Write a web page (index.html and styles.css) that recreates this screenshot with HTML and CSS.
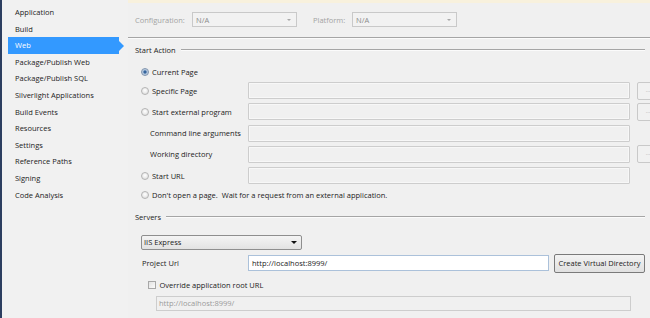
FILE: index.html
```html
<!DOCTYPE html>
<html>
<head>
<meta charset="utf-8">
<link rel="stylesheet" href="styles.css">
</head>
<body>
<div class="window">
  <nav class="sidebar">
    <div class="nav-item">Application</div>
    <div class="nav-item">Build</div>
    <div class="nav-item selected">Web</div>
    <div class="nav-item">Package/Publish Web</div>
    <div class="nav-item">Package/Publish SQL</div>
    <div class="nav-item">Silverlight Applications</div>
    <div class="nav-item">Build Events</div>
    <div class="nav-item">Resources</div>
    <div class="nav-item">Settings</div>
    <div class="nav-item">Reference Paths</div>
    <div class="nav-item">Signing</div>
    <div class="nav-item">Code Analysis</div>
  </nav>
  <main class="content">
    <div class="topstrip"></div>
    <div class="config-row">
      <span class="cfg-label cfg-config">Configuration:</span>
      <div class="combo disabled"><span>N/A</span><span class="caret gray"></span></div>
      <span class="cfg-label cfg-platform">Platform:</span>
      <div class="combo disabled"><span>N/A</span><span class="caret gray"></span></div>
    </div>
    <div class="rule"></div>
    <div class="section-head head-start"><span>Start Action</span><div class="line"></div></div>
    <div class="options">
      <div class="row r-first">
        <div class="opt"><span class="radio checked"></span><span>Current Page</span></div>
      </div>
      <div class="row r-second">
        <div class="opt"><span class="radio"></span><span>Specific Page</span></div>
        <div class="box"></div>
        <div class="ellipsis">...</div>
      </div>
      <div class="row">
        <div class="opt"><span class="radio"></span><span>Start external program</span></div>
        <div class="box"></div>
        <div class="ellipsis">...</div>
      </div>
      <div class="row">
        <div class="opt indent"><span>Command line arguments</span></div>
        <div class="box"></div>
      </div>
      <div class="row">
        <div class="opt indent"><span>Working directory</span></div>
        <div class="box"></div>
        <div class="ellipsis">...</div>
      </div>
      <div class="row">
        <div class="opt"><span class="radio"></span><span>Start URL</span></div>
        <div class="box"></div>
      </div>
      <div class="row r-last">
        <div class="opt wide"><span class="radio"></span><span>Don't open a page.&nbsp; Wait for a request from an external application.</span></div>
      </div>
    </div>
    <div class="section-head head-servers"><span>Servers</span><div class="line"></div></div>
    <div class="server-combo"><span>IIS Express</span><span class="caret"></span></div>
    <div class="url-row">
      <span class="url-label">Project Url</span>
      <div class="url-box">http://localhost:8999/</div>
      <div class="btn">Create Virtual Directory</div>
    </div>
    <div class="check-row"><span class="check"></span><span>Override application root URL</span></div>
    <div class="root-box">http://localhost:8999/</div>
  </main>
</div>
</body>
</html>
```
FILE: styles.css
```css
* { box-sizing: border-box; }
html, body { margin: 0; padding: 0; }
body {
  width: 650px;
  height: 318px;
  overflow: hidden;
  background: #f0f0f0;
  font-family: "Open Sans", "Noto Sans", sans-serif;
  font-size: 7.5px;
  color: #222;
}
.window { display: flex; height: 318px; }

.sidebar {
  width: 128px;
  flex: none;
  border-left: 2px solid #2c3e60;
  padding-top: 4px;
  background: #f1f1f1;
}
.nav-item {
  height: 16.6px;
  line-height: 16.6px;
  padding-left: 13px;
  white-space: nowrap;
}
.nav-item.selected {
  position: relative;
  margin-left: 6px;
  width: 111px;
  padding-left: 7px;
  background: #3399ff;
  color: #fff;
}
.nav-item.selected::after {
  content: "";
  position: absolute;
  right: -5px;
  top: 3.5px;
  border-top: 5px solid transparent;
  border-bottom: 5px solid transparent;
  border-left: 5px solid #3399ff;
}

.content {
  flex: 1;
  display: flex;
  flex-direction: column;
  padding-left: 7px;
  overflow: hidden;
}
.topstrip {
  height: 3px;
  margin-left: -7px;
  background: #f8f1dd;
}
.config-row {
  display: flex;
  align-items: center;
  margin-top: 9px;
  height: 15px;
}
.cfg-label { color: #a3a3a3; }
.cfg-config { width: 57px; }
.cfg-platform { width: 39px; margin-left: 16px; }
.combo {
  width: 105px;
  height: 15px;
  border: 1px solid #c9c9c9;
  display: flex;
  align-items: center;
  justify-content: space-between;
  padding: 0 5px 0 3px;
  color: #8c8c8c;
  background: #f2f2f2;
}
.caret {
  width: 0; height: 0;
  border-left: 3px solid transparent;
  border-right: 3px solid transparent;
  border-top: 3px solid #111;
}
.caret.gray { border-top-color: #a8a8a8; border-left-width: 2.5px; border-right-width: 2.5px; border-top-width: 2.5px; }

.rule {
  margin-top: 10px;
  margin-left: -7px;
  height: 2px;
  border-top: 1px solid #a5a5a5;
  border-bottom: 1px solid #fbfbfb;
}
.section-head {
  display: flex;
  align-items: center;
  height: 11px;
}
.section-head .line {
  flex: 1;
  height: 2px;
  margin: 0 5px 0 5px;
  border-top: 1px solid #a5a5a5;
  border-bottom: 1px solid #fbfbfb;
}
.head-start { margin-top: 5px; }
.head-servers { margin-top: 8px; }

.options { margin-top: 8px; padding-left: 6px; }
.row {
  display: flex;
  align-items: center;
  height: 17px;
  margin-top: 4.3px;
}
.row.r-first { margin-top: 0; }
.row.r-second { margin-top: 2px; }
.row.r-last { margin-top: 2.5px; }
.opt {
  width: 107px;
  flex: none;
  display: flex;
  align-items: center;
  white-space: nowrap;
}
.opt.wide { width: auto; }
.opt.indent { padding-left: 9px; }
.radio {
  width: 8px; height: 8px;
  border-radius: 50%;
  border: 1px solid #b4b4b4;
  background: radial-gradient(circle at 50% 40%, #ffffff 0%, #e4e4e4 70%, #d2d2d2 100%);
  margin-right: 3px;
  flex: none;
}
.radio.checked {
  border-color: #7f93ad;
  background: radial-gradient(circle, #2f5d94 0, #3b6aa3 30%, #a9bfd8 45%, #dce6f1 100%);
}
.box {
  width: 382px;
  height: 17px;
  flex: none;
  border: 1px solid #cdcdcd;
  border-radius: 1px;
  background: #f0f0f0;
  box-shadow: inset 0 0 0 1px #f7f7f7;
}
.ellipsis {
  width: 22px;
  height: 18px;
  flex: none;
  margin-left: 7px;
  border: 1px solid #c9c9c9;
  border-radius: 2px;
  background: #f1f1f1;
  color: #b0b0b0;
  font-size: 6px;
  line-height: 14px;
  text-align: center;
}

.server-combo {
  margin-top: 12px;
  margin-left: 6px;
  width: 161px;
  height: 15px;
  border: 1px solid #8e8e8e;
  border-radius: 2px;
  background: linear-gradient(#f4f4f4, #e2e2e2);
  display: flex;
  align-items: center;
  justify-content: space-between;
  padding: 0 4px 0 2px;
}
.url-row {
  display: flex;
  align-items: center;
  margin-top: 4px;
  height: 19px;
}
.url-label { width: 113px; padding-left: 7px; flex: none; }
.url-box {
  width: 301px;
  height: 16px;
  flex: none;
  border: 1px solid #abc1da;
  background: #fff;
  padding-left: 3px;
  line-height: 14px;
  white-space: nowrap;
}
.btn {
  width: 91px;
  height: 19px;
  flex: none;
  margin-left: 5px;
  border: 1px solid #7a7a7a;
  border-radius: 2px;
  background: linear-gradient(#f3f3f3, #e0e0e0);
  text-align: center;
  line-height: 17px;
  white-space: nowrap;
}
.check-row {
  display: flex;
  align-items: center;
  margin-top: 6px;
  height: 12px;
  padding-left: 13px;
}
.check {
  width: 8px; height: 8px;
  border: 1px solid #a8a8a8;
  background: linear-gradient(135deg, #e2e2e2, #fbfbfb);
  margin-right: 3.5px;
}
.root-box {
  margin-top: 5px;
  margin-left: 21px;
  width: 475px;
  height: 15px;
  border: 1px solid #cdcdcd;
  background: #f0f0f0;
  color: #9a9a9a;
  padding-left: 2px;
  line-height: 13px;
}
```
